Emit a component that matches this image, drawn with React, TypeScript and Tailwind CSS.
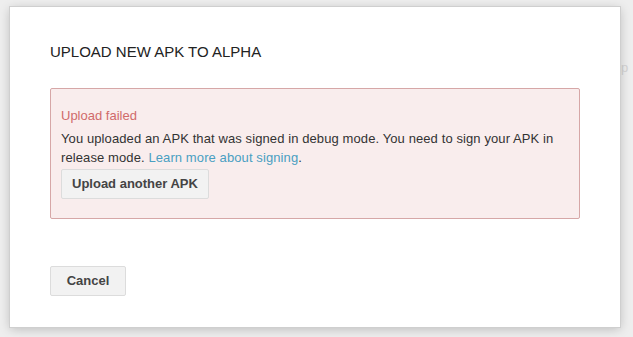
export default function App() {
  return (
    <div
      className="relative h-[337px] w-[633px] overflow-hidden bg-[#eeeeee] pl-[10px] pt-[7px]"
      style={{ fontFamily: '"Liberation Sans", Arial, sans-serif' }}
    >
      <span className="absolute left-[621px] top-[58px] text-[13px] text-[#d4d4d4]">p</span>
      <div className="relative flex h-[320px] w-[610px] flex-col bg-white px-[40px] pt-[35px] shadow-[0_2px_10px_rgba(0,0,0,0.22)] outline outline-1 outline-[#cfcfcf]">
        <h1 className="text-[15px] leading-[20px] font-normal text-[#222222]">UPLOAD NEW APK TO ALPHA</h1>
        <div className="mt-[26px] flex h-[131px] w-[530px] flex-col items-start rounded-[2px] border border-[#d6a7a7] bg-[#f9eded] pl-[10px] pr-[10px] pt-[17px]">
          <div className="text-[13px] leading-[19px] text-[#d06a6a]">Upload failed</div>
          <p className="mt-[4px] text-[13px] leading-[19px] tracking-[0.1px] text-[#333333]">
            You uploaded an APK that was signed in debug mode. You need to sign your APK in release mode.{' '}
            <span className="text-[#4a9fc2]">Learn more about signing</span>.
          </p>
          <button className="mt-[2px] h-[30px] rounded-[2px] border border-[#dcdcdc] bg-[#f2f2f2] px-[10px] text-[13px] font-bold text-[#444444]">
            Upload another APK
          </button>
        </div>
        <button className="mt-[47px] h-[30px] w-[76px] rounded-[2px] border border-[#dcdcdc] bg-[#f2f2f2] text-[13px] font-bold text-[#444444]">
          Cancel
        </button>
      </div>
    </div>
  );
}
